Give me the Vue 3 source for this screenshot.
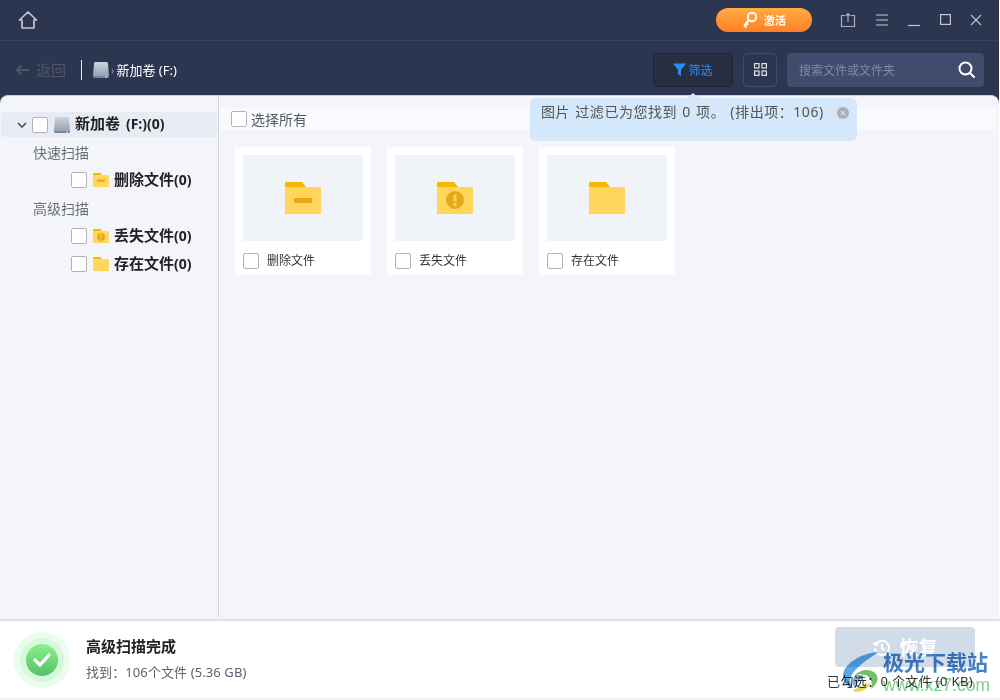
<script setup>
const tree = [
  { label: '快速扫描', items: [{ name: '删除文件', kind: 'minus' }] },
  { label: '高级扫描', items: [{ name: '丢失文件', kind: 'warn' }, { name: '存在文件', kind: 'plain' }] }
]
const cards = [
  { name: '删除文件', kind: 'minus' },
  { name: '丢失文件', kind: 'warn' },
  { name: '存在文件', kind: 'plain' }
]
</script>

<template>
  <div class="app">
    <div class="window">
      <header class="titlebar">
        <svg class="home" width="20" height="20" viewBox="0 0 20 20" fill="none" stroke="#c3c8d2" stroke-width="1.7"><path d="M1.5 10 10 2l8.500 8h-2.500v8H4v-8z" stroke-linejoin="round"/></svg>
        <div class="spring"></div>
        <button class="activate">
          <svg width="16" height="18" viewBox="0 0 16 18" fill="none" stroke="#fff" stroke-width="2"><circle cx="10" cy="6" r="4.200"/><path d="M7 9 2 15M2.500 14.500l2 2M4.500 12.500l1.500 1.500"/></svg>
          <span>激活</span>
        </button>
        <div class="winbtns">
          <svg width="16" height="16" viewBox="0 0 16 16" fill="none" stroke="#aab0bd" stroke-width="1.200"><path d="M5 3.500H1.500v11h13v-11H11M8 10V1.500M5.800 3.800 8 1.500l2.200 2.300"/></svg>
          <svg width="14" height="14" viewBox="0 0 14 14" fill="none" stroke="#c3c8d2" stroke-width="1.200"><path d="M1 2h12M1 7h12M1 12h12"/></svg>
          <svg width="13" height="14" viewBox="0 0 13 14" fill="none" stroke="#c3c8d2" stroke-width="1.200"><path d="M0 12.500h12"/></svg>
          <svg width="11" height="11" viewBox="0 0 11 11" fill="none" stroke="#c3c8d2" stroke-width="1.200"><rect x=".6" y=".6" width="9.800" height="9.800"/></svg>
          <svg width="12" height="12" viewBox="0 0 12 12" fill="none" stroke="#c3c8d2" stroke-width="1.100"><path d="m1 1 10 10M11 1 1 11"/></svg>
        </div>
      </header>

      <nav class="toolbar">
        <div class="back">
          <svg width="15" height="12" viewBox="0 0 15 12" fill="none" stroke="#4d5669" stroke-width="2"><path d="M14 6H2M6.500 1.300 1.800 6l4.700 4.700"/></svg>
          <span>返回</span>
        </div>
        <div class="vline"></div>
        <div class="crumb">
          <svg width="16" height="16" viewBox="0 0 16 16"><defs><linearGradient id="d1" x1="0" y1="0" x2="0" y2="1"><stop offset="0" stop-color="#cdd5de"/><stop offset="1" stop-color="#93a3b5"/></linearGradient></defs><path d="M2.500 0h11a1.500 1.500 0 0 1 1.500 1.500L16 14H0L1 1.500A1.500 1.500 0 0 1 2.500 0z" fill="url(#d1)"/><path d="M0 14h16v.5a1.500 1.500 0 0 1-1.500 1.500h-13A1.500 1.500 0 0 1 0 14.500z" fill="#75869a"/><rect x="12" y="14.500" width="2" height="1" fill="#dde3ea"/></svg>
          <span class="chev">›</span>
          <span>新加卷 (F:)</span>
        </div>
        <div class="spring"></div>
        <button class="filter">
          <svg width="13" height="13" viewBox="0 0 13 13" fill="#2d8cf0"><path d="M0 .5h13L8 7v6L5 11V7z"/></svg>
          <span>筛选</span>
        </button>
        <button class="grid-btn">
          <svg width="13" height="13" viewBox="0 0 13 13" fill="none" stroke="#dfe3ea" stroke-width="1.200"><rect x=".6" y=".6" width="4.400" height="4.400"/><rect x="8" y=".6" width="4.400" height="4.400"/><rect x=".6" y="8" width="4.400" height="4.400"/><rect x="8" y="8" width="4.400" height="4.400"/></svg>
        </button>
        <div class="search">
          <span>搜索文件或文件夹</span>
          <svg width="17" height="17" viewBox="0 0 17 17" fill="none" stroke="#fff" stroke-width="2"><circle cx="7.500" cy="7.500" r="6"/><path d="m12 12 4 4" stroke-linecap="round"/></svg>
        </div>
      </nav>

      <main class="body">
        <aside class="side">
          <div class="root-row">
            <svg class="caret" width="10" height="6" viewBox="0 0 10 6" fill="none" stroke="#3d4658" stroke-width="1.500"><path d="m1 1 4 4 4-4"/></svg>
            <span class="check"></span>
            <svg class="root-disk" width="16" height="16" viewBox="0 0 16 16"><defs><linearGradient id="d2" x1="0" y1="0" x2="0" y2="1"><stop offset="0" stop-color="#cdd5de"/><stop offset="1" stop-color="#93a3b5"/></linearGradient></defs><path d="M2.500 0h11a1.500 1.500 0 0 1 1.500 1.500L16 14H0L1 1.500A1.500 1.500 0 0 1 2.500 0z" fill="url(#d2)"/><path d="M0 14h16v.5a1.500 1.500 0 0 1-1.500 1.500h-13A1.500 1.500 0 0 1 0 14.500z" fill="#75869a"/><rect x="12" y="14.500" width="2" height="1" fill="#dde3ea"/></svg>
            <b class="root-name">新加卷 <small>(F:)(0)</small></b>
          </div>
          <template v-for="group in tree" :key="group.label">
            <div class="group">{{ group.label }}</div>
            <div v-for="item in group.items" :key="item.name" class="tree-item">
              <span class="check"></span>
              <svg width="16" height="14" viewBox="0 0 36 32">
                <path d="M0 0h17l4 5H0z" fill="#f2b900"/><path d="M0 5h36v27H0z" fill="#ffd659"/>
                <rect v-if="item.kind === 'minus'" x="9" y="15" width="18" height="5" fill="#e3a91b"/>
                <g v-if="item.kind === 'warn'"><circle cx="18" cy="18" r="9" fill="#e3a91b"/><path d="M16.500 12h3v7h-3zM16.500 21h3v3h-3z" fill="#ffd659"/></g>
              </svg>
              <b>{{ item.name }}<small>(0)</small></b>
            </div>
          </template>
        </aside>

        <section class="content">
          <div class="select-all">
            <span class="check"></span>
            <span>选择所有</span>
          </div>
          <div class="cards">
            <article v-for="card in cards" :key="card.name" class="card">
              <div class="thumb">
                <svg width="36" height="32" viewBox="0 0 36 32">
                  <path d="M0 0h17l4 5H0z" fill="#f2b900"/><path d="M0 5h36v27H0z" fill="#ffd659"/>
                  <rect v-if="card.kind === 'minus'" x="9" y="16" width="18" height="5" fill="#e3a91b"/>
                  <g v-if="card.kind === 'warn'"><circle cx="18" cy="18" r="9" fill="#e3a91b"/><path d="M16.500 12.500h3v7h-3zM16.500 21h3v3h-3z" fill="#ffd659"/></g>
                </svg>
              </div>
              <div class="card-foot">
                <span class="check"></span>
                <span>{{ card.name }}</span>
              </div>
            </article>
          </div>
        </section>
      </main>
    </div>

    <footer class="foot">
      <div class="halo"><div class="halo2"><div class="ok">
        <svg width="20" height="16" viewBox="0 0 20 16" fill="none" stroke="#fff" stroke-width="3.200" stroke-linecap="round" stroke-linejoin="round"><path d="m3 8 5 5 9-10"/></svg>
      </div></div></div>
      <div class="foot-text">
        <b>高级扫描完成</b>
        <span>找到：106个文件 (5.36 GB)</span>
      </div>
      <div class="spring"></div>
      <div class="foot-right">
        <button class="restore">
          <svg width="19" height="19" viewBox="0 0 20 20" fill="none" stroke="#fff" stroke-width="2"><path d="M4 6.500A7.500 7.500 0 1 1 3 11M1.500 5 4 7.500 7 6M10.500 6v5l3 2"/></svg>
          <span>恢复</span>
        </button>
        <div class="picked">已勾选：0 个文件 (0 KB)</div>
      </div>
    </footer>

    <div class="tip">
      <span class="tip-arrow"></span>
      <span>图片 过滤已为您找到 0 项。 (排出项：106)</span>
      <span class="tip-x">×</span>
    </div>

    <div class="mark">
      <svg width="40" height="48" viewBox="0 0 40 48">
        <path d="M36 2C18 3 0 14 0 26c0 6 4 11 10 12-4-5-4-10 0-15C16 15 26 8 36 2z" fill="#5aa8e6"/>
        <path d="M14 24c-5 4-6 9-2 14 2-4 4-8 8-11z" fill="#86aed4"/>
        <path d="M12 25c6-6 16-7 21-1 4 5 0 11-5 15 2-6 0-12-6-14-4-1-7-1-10 0z" fill="#6fc267"/>
        <path d="M10 40c6-3 12-4 17-7-1 5-7 9-15 9z" fill="#e4dc4e"/>
      </svg>
      <div class="mark-text">
        <div class="mark-cn">极光下载站</div>
        <div class="mark-en">www.xz7.com</div>
      </div>
    </div>
  </div>
</template>

<style>
html, body { margin: 0; background: #fff; }
</style>

<style scoped>
* { box-sizing: border-box; }
.app {
  position: relative; width: 1000px; height: 700px; overflow: hidden;
  display: flex; flex-direction: column; background: #fff;
  font-family: "Noto Sans", "Noto Sans CJK SC", sans-serif; font-size: 13px; color: #333;
}
.window { flex: 1; min-height: 0; width: 999px; display: flex; flex-direction: column; background: #2d3650; }
.spring { flex: 1; }
button { font-family: inherit; border: 0; padding: 0; }
.titlebar {
  height: 41px; flex: none; display: flex; align-items: center;
  padding: 0 17px 1px 18px; border-bottom: 1px solid #3a4359;
}
.activate {
  width: 96px; height: 24px; border-radius: 12px; display: flex; align-items: center; justify-content: center; gap: 6px;
  background: linear-gradient(#ffac40, #ff7e26); color: #fff; font-size: 11px; font-weight: 700;
}
.winbtns { display: flex; align-items: center; margin-left: 28px; width: 142px; justify-content: space-between; }
.toolbar {
  height: 54px; flex: none; display: flex; align-items: center; padding: 3px 15px 0 15px; color: #fff;
}
.back { display: flex; align-items: center; gap: 6px; color: #4d5669; font-size: 15px; width: 66px; }
.vline { width: 1px; height: 20px; background: #e8eaee; }
.crumb { display: flex; align-items: center; margin-left: 11px; font-size: 13px; color: #fff; }
.chev { color: #8f97a8; margin: 0 2px 0 2px; font-size: 11px; }
.filter {
  width: 80px; height: 34px; border-radius: 4px; background: #262e42; border: 1px solid #1e2535;
  display: flex; align-items: center; justify-content: center; gap: 2px; color: #2d8cf0; font-size: 12px;
}
.grid-btn {
  width: 34px; height: 34px; margin-left: 10px; border-radius: 4px; background: transparent; border: 1px solid #434d68;
  display: flex; align-items: center; justify-content: center;
}
.search {
  width: 197px; height: 34px; margin-left: 10px; border-radius: 4px; background: #404c6e; color: #8089a3;
  display: flex; align-items: center; justify-content: space-between; padding: 0 9px 0 12px; font-size: 12px;
}
.body {
  flex: 1; min-height: 0; display: flex; background: #f3f5fa; border-radius: 8px 8px 0 0;
  border-top: 1px solid #c9ced8;
}
.side { width: 219px; flex: none; border-right: 1px solid #cfd2d8; padding: 16px 0 0 1px; margin-bottom: 2px; }
.check {
  display: inline-block; flex: none; width: 16px; height: 16px; border-radius: 2px; background: #fff; border: 1px solid #b3b3b3;
}
.root-row {
  height: 25px; width: 216px; border-radius: 4px; background: #e8ebf3; display: flex; align-items: center; padding-left: 16px;
}
.caret { margin-right: 5px; }
.root-disk { margin: 0 5px 0 6px; flex: none; }
.root-name { font-size: 15px; line-height: 18px; color: #222; white-space: pre; margin-bottom: 2px; }
.root-name small { margin-left: 2px; }
small { font-size: 14px; font-weight: 700; }
.group { height: 28px; padding: 6px 0 0 32px; color: #6b6f78; font-size: 14px; line-height: 18px; }
.root-row + .group { margin-top: 1px; }
.tree-item { height: 28px; display: flex; align-items: center; padding-left: 70px; gap: 6px; }
.tree-item b { font-size: 15px; line-height: 18px; color: #222; margin: 0 0 2px -1px; }
.content { flex: 1; padding-top: 12px; position: relative; }
.select-all {
  height: 22px; width: 777px; display: flex; align-items: center; gap: 4px; padding-left: 12px;
  color: #555a66; font-size: 14px; background: #f9fafd;
}
.cards { display: flex; gap: 16px; padding: 17px 0 0 16px; }
.card { width: 136px; height: 128px; background: #fff; padding: 8px 8px 0 8px; }
.thumb { height: 86px; width: 120px; background: #f0f3f8; display: flex; align-items: center; justify-content: center; }
.card-foot { display: flex; align-items: center; gap: 8px; height: 40px; font-size: 12px; line-height: 16px; color: #333; }
.foot {
  height: 81px; flex: none; background: #fff; border-top: 2px solid #dfe1e6; border-bottom: 2px solid #f0f1f5; display: flex; align-items: center; padding: 0 25px 0 14px;
}
.halo { width: 56px; height: 56px; border-radius: 50%; background: #e9fdea; display: flex; align-items: center; justify-content: center; }
.halo2 { width: 44px; height: 44px; border-radius: 50%; background: #d7f8da; display: flex; align-items: center; justify-content: center; }
.ok { width: 32px; height: 32px; border-radius: 50%; background: linear-gradient(#8cf08c, #52c268); display: flex; align-items: center; justify-content: center; }
.foot-text { display: flex; flex-direction: column; gap: 8px; margin-left: 16px; margin-top: -2px; }
.foot-text b { font-size: 15px; color: #222; line-height: 18px; }
.foot-text span { font-size: 13px; color: #5c6270; line-height: 18px; letter-spacing: .1px; }
.foot-right { position: relative; width: 140px; height: 60px; align-self: flex-start; margin-top: 6px; }
.restore {
  width: 140px; height: 40px; border-radius: 4px; background: #d1dce8; color: #fff; font-size: 19px; font-weight: 700;
  display: flex; align-items: center; justify-content: center; gap: 8px;
}
.picked { position: absolute; right: 2px; top: 45px; white-space: nowrap; font-size: 13px; line-height: 18px; color: #333; letter-spacing: .35px; }
.tip {
  position: absolute; left: 530px; top: 98px; width: 327px; height: 43px; border-radius: 6px; background: #d5e7fa;
  color: #555; font-size: 14px; line-height: 18px; padding: 5px 8px 5px 11px; display: flex; justify-content: space-between; letter-spacing: .55px; word-spacing: 1px;
}
.tip-arrow { position: absolute; left: 157px; top: -5px; border: 6px solid transparent; border-top: 0; border-bottom: 5px solid #d5e7fa; }
.tip-x {
  width: 12px; height: 12px; border-radius: 50%; background: #a9afb9; color: #e3e9f2; font-size: 11px; line-height: 12px; text-align: center; margin-top: 4px; letter-spacing: 0;
}
.mark { position: absolute; left: 843px; top: 650px; display: flex; pointer-events: none; mix-blend-mode: multiply; }
.mark-text { margin-top: -1px; }
.mark-cn { font-size: 21px; line-height: 26px; color: #4482c8; font-weight: 700; white-space: nowrap; }
.mark-en { font-family: "Liberation Sans", sans-serif; font-size: 17.500px; line-height: 20px; color: #7ccf8a; }
</style>
